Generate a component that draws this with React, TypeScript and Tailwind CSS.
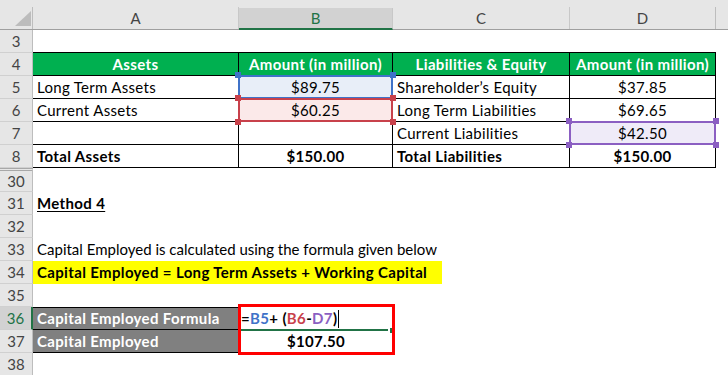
import React from "react";

const F = { fontFamily: "Lato, 'Noto Sans', sans-serif" };

function RowHead({ n, active, doubleTop }: { n: string; active?: boolean; doubleTop?: boolean }) {
  return (
    <div
      className={
        "w-[33px] shrink-0 flex items-center justify-center text-[15px] border-b border-[#d0d0d0] " +
        (active
          ? "bg-[#d2d2d2] text-[#217346] border-r-2 border-r-[#217346]"
          : "bg-[#e6e6e6] text-[#444] border-r border-r-[#bdbdbd]") +
        (doubleTop ? " border-t-[3px] border-double border-t-[#a8a8a8]" : "")
      }
    >
      {n}
    </div>
  );
}

function Handle({ pos, color }: { pos: string; color: string }) {
  return <div className={"absolute w-[6px] h-[6px] " + pos} style={{ background: color }} />;
}

function RefBox({ color, hide }: { color: string; hide?: string[] }) {
  const h = hide || [];
  return (
    <>
      <div className="absolute -left-[1px] -top-[1px] -right-[1px] -bottom-[1px] border-2 pointer-events-none" style={{ borderColor: color }} />
      {!h.includes("tl") && <Handle pos="-left-[4px] -top-[4px]" color={color} />}
      {!h.includes("tr") && <Handle pos="-right-[4px] -top-[4px]" color={color} />}
      {!h.includes("bl") && <Handle pos="-left-[4px] -bottom-[4px]" color={color} />}
      {!h.includes("br") && <Handle pos="-right-[4px] -bottom-[4px]" color={color} />}
    </>
  );
}

const wA = "w-[206px] shrink-0";
const wB = "w-[154px] shrink-0";
const wC = "w-[177px] shrink-0";
const wD = "w-[146px] shrink-0";
const B = "font-bold tracking-[0.35px]";

export default function App() {
  const tb = "border-r border-b border-black box-border";
  return (
    <div className="w-[728px] h-[375px] overflow-hidden bg-white text-black text-[15px]" style={F}>
      {/* column header */}
      <div className="h-[30px] bg-[#e6e6e6] flex items-end border-b border-[#9f9f9f]">
        <div className="w-[33px] h-[22px] shrink-0 border-r border-[#bdbdbd] relative">
          <svg className="absolute left-[15px] top-[4px]" width="16" height="15" viewBox="0 0 16 15">
            <polygon points="16,0 16,15 0,15" fill="#bcbcbc" />
          </svg>
        </div>
        <div className={wA + " h-[22px] flex items-center justify-center text-[#444] border-r border-[#c8c8c8]"}>A</div>
        <div className={wB + " h-[22px] flex items-center justify-center text-[#217346] bg-[#d2d2d2] border-b-2 border-[#217346] border-r border-r-[#c8c8c8] -mb-px"}>B</div>
        <div className={wC + " h-[22px] flex items-center justify-center text-[#444] border-r border-[#c8c8c8]"}>C</div>
        <div className={wD + " h-[22px] flex items-center justify-center text-[#444] border-r border-[#bdbdbd]"}>D</div>
        <div className="flex-1 h-[22px]" />
      </div>

      {/* row 3 */}
      <div className="flex h-[23px]">
        <RowHead n="3" />
        <div className={wA + " border-b border-black"} />
        <div className={wB + " border-b border-black"} />
        <div className={wC + " border-b border-black"} />
        <div className={wD + " border-b border-black"} />
      </div>

      {/* row 4 header */}
      <div className="flex h-[23px]">
        <RowHead n="4" />
        <div className={wA + " " + tb + " bg-[#00b050] text-white " + B + " flex items-center justify-center"}>Assets</div>
        <div className={wB + " " + tb + " bg-[#00b050] text-white " + B + " flex items-center justify-center whitespace-nowrap"}>
          Amount (in million)
        </div>
        <div className={wC + " " + tb + " bg-[#00b050] text-white " + B + " flex items-center justify-center"}>Liabilities &amp; Equity</div>
        <div className={wD + " " + tb + " bg-[#00b050] text-white " + B + " flex items-center justify-center whitespace-nowrap"}>Amount (in million)</div>
      </div>

      {/* row 5 */}
      <div className="flex h-[23px]">
        <RowHead n="5" />
        <div className={wA + " " + tb + " flex items-center pl-[4px] tracking-[0.3px]"}>Long Term Assets</div>
        <div className={wB + " " + tb + " bg-[#e8eef8] flex items-center justify-center relative tracking-[0.3px]"}>
          $89.75
          <RefBox color="#3f72c8" hide={["bl", "br"]} />
        </div>
        <div className={wC + " " + tb + " flex items-center pl-[4px] tracking-[0.3px]"}>Shareholder’s Equity</div>
        <div className={wD + " " + tb + " flex items-center justify-center tracking-[0.3px]"}>$37.85</div>
      </div>

      {/* row 6 */}
      <div className="flex h-[23px]">
        <RowHead n="6" />
        <div className={wA + " " + tb + " flex items-center pl-[4px] tracking-[0.3px]"}>Current Assets</div>
        <div className={wB + " " + tb + " bg-[#fbe9e9] flex items-center justify-center relative z-10 tracking-[0.3px]"}>
          $60.25
          <RefBox color="#c8414b" />
        </div>
        <div className={wC + " " + tb + " flex items-center pl-[4px] tracking-[0.3px]"}>Long Term Liabilities</div>
        <div className={wD + " " + tb + " flex items-center justify-center tracking-[0.3px]"}>$69.65</div>
      </div>

      {/* row 7 */}
      <div className="flex h-[23px]">
        <RowHead n="7" />
        <div className={wA + " " + tb} />
        <div className={wB + " " + tb} />
        <div className={wC + " " + tb + " flex items-center pl-[4px] tracking-[0.3px]"}>Current Liabilities</div>
        <div className={wD + " " + tb + " bg-[#efebf8] flex items-center justify-center relative tracking-[0.3px]"}>
          $42.50
          <RefBox color="#8b5fc2" />
        </div>
      </div>

      {/* row 8 */}
      <div className="flex h-[23px]">
        <RowHead n="8" />
        <div className={wA + " " + tb + " flex items-center pl-[4px] " + B}>Total Assets</div>
        <div className={wB + " " + tb + " flex items-center justify-center " + B}>$150.00</div>
        <div className={wC + " " + tb + " flex items-center pl-[4px] " + B}>Total Liabilities</div>
        <div className={wD + " " + tb + " flex items-center justify-center " + B}>$150.00</div>
      </div>

      {/* row 30 */}
      <div className="flex h-[24px]">
        <RowHead n="30" doubleTop />
      </div>

      {/* row 31 */}
      <div className="flex h-[23px]">
        <RowHead n="31" />
        <div className={"flex items-center pl-[4px] underline underline-offset-2 " + B}>Method 4</div>
      </div>

      {/* row 32 */}
      <div className="flex h-[23px]">
        <RowHead n="32" />
      </div>

      {/* row 33 */}
      <div className="flex h-[23px]">
        <RowHead n="33" />
        <div className="flex items-center pl-[4px] whitespace-nowrap">Capital Employed is calculated using the formula given below</div>
      </div>

      {/* row 34 */}
      <div className="flex h-[23px]">
        <RowHead n="34" />
        <div className={"w-[409px] bg-[#ffff00] flex items-center pl-[4px] whitespace-nowrap " + B}>
          Capital Employed = Long Term Assets + Working Capital
        </div>
      </div>

      {/* row 35 */}
      <div className="flex h-[23px]">
        <RowHead n="35" />
      </div>

      {/* row 36 */}
      <div className="flex h-[23px]">
        <RowHead n="36" active />
        <div className={wA + " bg-[#808080] text-white flex items-center pl-[4px] border-t border-b border-black " + B}>
          Capital Employed Formula
        </div>
        <div className={wB + " relative flex items-center pl-[2px] " + B}>
          <span>=</span>
          <span className="text-[#3f72c8]">B5</span>
          <span>+ (</span>
          <span className="text-[#c8414b]">B6</span>
          <span>-</span>
          <span className="text-[#8b5fc2]">D7</span>
          <span>)</span>
          <span className="inline-block w-px h-[18px] bg-black ml-[1px]" />
          <div className="absolute left-0 right-[5px] bottom-[-1px] h-[2px] bg-[#217346]" />
          <div className="absolute right-[-2px] bottom-[-3px] w-[5px] h-[5px] bg-[#217346]" />
          <div className="absolute left-[-1px] top-[-3px] w-[157px] h-[51px] border-[3px] border-[#ff0000] z-10" />
        </div>
      </div>

      {/* row 37 */}
      <div className="flex h-[23px]">
        <RowHead n="37" />
        <div className={wA + " bg-[#808080] text-white flex items-center pl-[4px] border-b border-black " + B}>
          Capital Employed
        </div>
        <div className={wB + " flex items-center justify-center " + B}>$107.50</div>
      </div>

      {/* row 38 */}
      <div className="flex h-[23px]">
        <RowHead n="38" />
      </div>
    </div>
  );
}
